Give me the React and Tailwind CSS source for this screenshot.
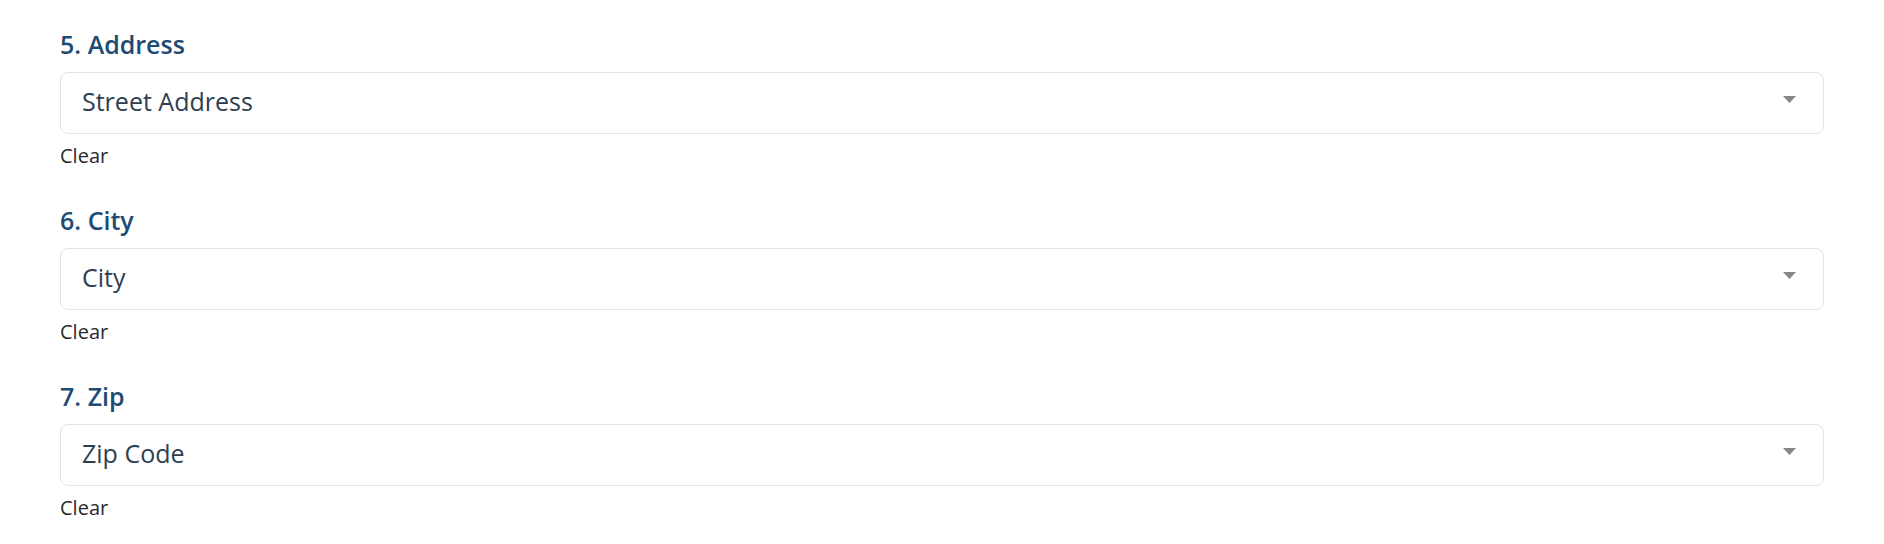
import React from 'react';

const fields = [
    { label: '5. Address', placeholder: 'Street Address' },
    { label: '6. City', placeholder: 'City' },
    { label: '7. Zip', placeholder: 'Zip Code' },
];

export default function App() {
    return (
        <div className="min-h-screen bg-white px-[60px] pt-[27px] font-['Open_Sans',sans-serif]">
            <div className="flex flex-col gap-[34px]">
                {fields.map((f) => (
                    <div key={f.label}>
                        <h3 className="text-[25px] leading-[34px] font-semibold text-[#1d4b74]">{f.label}</h3>
                        <div className="mt-[11px] h-[62px] flex items-center justify-between pl-[21px] pr-[27px] pb-[2px] bg-white border border-[#e3e3e3] rounded-[8px]">
                            <span className="text-[25px] text-[#2d3e50]">{f.placeholder}</span>
                            <svg width="13" height="7" viewBox="0 0 13 7" className="-mt-[5px]">
                                <path d="M0 0 L13 0 L6.5 7 Z" fill="#888888" />
                            </svg>
                        </div>
                        <div className="mt-[8px] text-[20px] leading-[27px] text-[#2b2b2b]">Clear</div>
                    </div>
                ))}
            </div>
        </div>
    );
}
